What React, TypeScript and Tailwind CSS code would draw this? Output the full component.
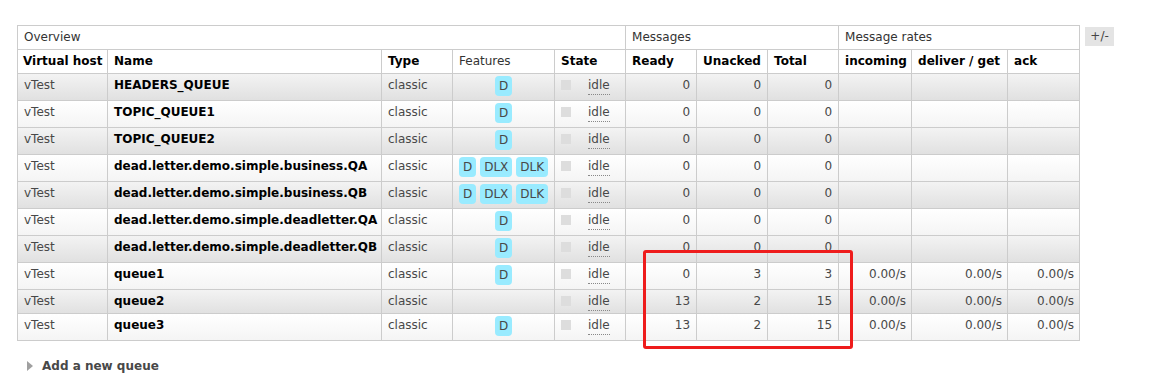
import React from "react";

type Row = {
  name: string;
  features: string[];
  ready: number;
  unacked: number;
  total: number;
  rates: boolean;
};

const rows: Row[] = [
  { name: "HEADERS_QUEUE", features: ["D"], ready: 0, unacked: 0, total: 0, rates: false },
  { name: "TOPIC_QUEUE1", features: ["D"], ready: 0, unacked: 0, total: 0, rates: false },
  { name: "TOPIC_QUEUE2", features: ["D"], ready: 0, unacked: 0, total: 0, rates: false },
  { name: "dead.letter.demo.simple.business.QA", features: ["D", "DLX", "DLK"], ready: 0, unacked: 0, total: 0, rates: false },
  { name: "dead.letter.demo.simple.business.QB", features: ["D", "DLX", "DLK"], ready: 0, unacked: 0, total: 0, rates: false },
  { name: "dead.letter.demo.simple.deadletter.QA", features: ["D"], ready: 0, unacked: 0, total: 0, rates: false },
  { name: "dead.letter.demo.simple.deadletter.QB", features: ["D"], ready: 0, unacked: 0, total: 0, rates: false },
  { name: "queue1", features: ["D"], ready: 0, unacked: 3, total: 3, rates: true },
  { name: "queue2", features: [], ready: 13, unacked: 2, total: 15, rates: true },
  { name: "queue3", features: ["D"], ready: 13, unacked: 2, total: 15, rates: true },
];

const cell = "border border-[#cccccc] align-top px-[6px] pt-[3px] leading-[16px] whitespace-nowrap";
const num = `${cell} text-right`;

function Badge({ label }: { label: string }) {
  return (
    <span className="inline-block bg-[#99ebff] text-[#484848] rounded-[4px] px-[4px] mt-[1px] leading-[20px] mx-[2px]">
      {label}
    </span>
  );
}

export default function App() {
  return (
    <div
      className="w-[1167px] h-[377px] bg-white text-[12px] text-[#484848] overflow-hidden"
      style={{ fontFamily: '"DejaVu Sans", Verdana, sans-serif' }}
    >
      <div className="flex items-start pt-[25px] pl-[17px]">
        <div className="relative">
          <table className="table-fixed border-collapse w-[1062px]">
            <colgroup>
              <col className="w-[90px]" />
              <col className="w-[274px]" />
              <col className="w-[71px]" />
              <col className="w-[102px]" />
              <col className="w-[71px]" />
              <col className="w-[71px]" />
              <col className="w-[71px]" />
              <col className="w-[71px]" />
              <col className="w-[73px]" />
              <col className="w-[96px]" />
              <col className="w-[72px]" />
            </colgroup>
            <thead>
              <tr className="h-[24px]">
                <th colSpan={5} className={`${cell} text-left font-normal text-[#333]`}>Overview</th>
                <th colSpan={3} className={`${cell} text-left font-normal text-[#333]`}>Messages</th>
                <th colSpan={3} className={`${cell} text-left font-normal text-[#333]`}>Message rates</th>
              </tr>
              <tr className="h-[24px] text-black">
                <th className={`${cell} text-left !pl-[5px] overflow-hidden`}>Virtual host</th>
                <th className={`${cell} text-left`}>Name</th>
                <th className={`${cell} text-left`}>Type</th>
                <th className={`${cell} text-left font-normal text-[#333]`}>Features</th>
                <th className={`${cell} text-left`}>State</th>
                <th className={`${cell} text-left`}>Ready</th>
                <th className={`${cell} text-left`}>Unacked</th>
                <th className={`${cell} text-left`}>Total</th>
                <th className={`${cell} text-left`}>incoming</th>
                <th className={`${cell} text-left`}>deliver / get</th>
                <th className={`${cell} text-left`}>ack</th>
              </tr>
            </thead>
            <tbody>
              {rows.map((r, i) => (
                <tr
                  key={r.name}
                  className={`${r.features.length ? "h-[27px]" : "h-[24px]"} ${
                    i % 2 === 0
                      ? "bg-gradient-to-b from-[#f3f3f3] to-[#e0e0e0]"
                      : "bg-gradient-to-b from-[#ffffff] to-[#f4f4f4]"
                  }`}
                >
                  <td className={cell}>vTest</td>
                  <td className={`${cell} font-bold text-black`}>{r.name}</td>
                  <td className={cell}>classic</td>
                  <td className={`${cell} text-center !px-[2px] !pt-[1px]`}>
                    {r.features.map((f) => (
                      <Badge key={f} label={f} />
                    ))}
                  </td>
                  <td className={cell}>
                    <div className="flex items-start">
                      <span className="inline-block w-[10px] h-[10px] bg-[#dddddd] mt-[3px]" />
                      <span className="ml-[17px] border-b border-dotted border-[#888] leading-[17px]">idle</span>
                    </div>
                  </td>
                  <td className={num}>{r.ready}</td>
                  <td className={num}>{r.unacked}</td>
                  <td className={num}>{r.total}</td>
                  <td className={`${num} !pr-[5px]`}>{r.rates ? "0.00/s" : ""}</td>
                  <td className={`${num} !pr-[5px]`}>{r.rates ? "0.00/s" : ""}</td>
                  <td className={`${num} !pr-[5px]`}>{r.rates ? "0.00/s" : ""}</td>
                </tr>
              ))}
            </tbody>
          </table>
          {/* highlight around the queue1–queue3 message counts */}
          <div className="absolute left-[626px] top-[225px] w-[210px] h-[99px] border-[3px] border-[#ee1c1c] rounded-[3px] pointer-events-none" />
        </div>
        <button className="ml-[5px] mt-[2px] w-[29px] h-[19px] bg-[#e4e4e4] text-[#444] text-[12px] leading-[19px] text-center">
          +/-
        </button>
      </div>
      <div className="flex items-center mt-[17px] ml-[27px]">
        <svg width="6" height="10" viewBox="0 0 6 10" className="mr-[9px]">
          <polygon points="0,0 6,5 0,10" fill="#a0a0a0" />
        </svg>
        <span className="font-bold text-[#484848] text-[12px] leading-[16px]">Add a new queue</span>
      </div>
    </div>
  );
}
